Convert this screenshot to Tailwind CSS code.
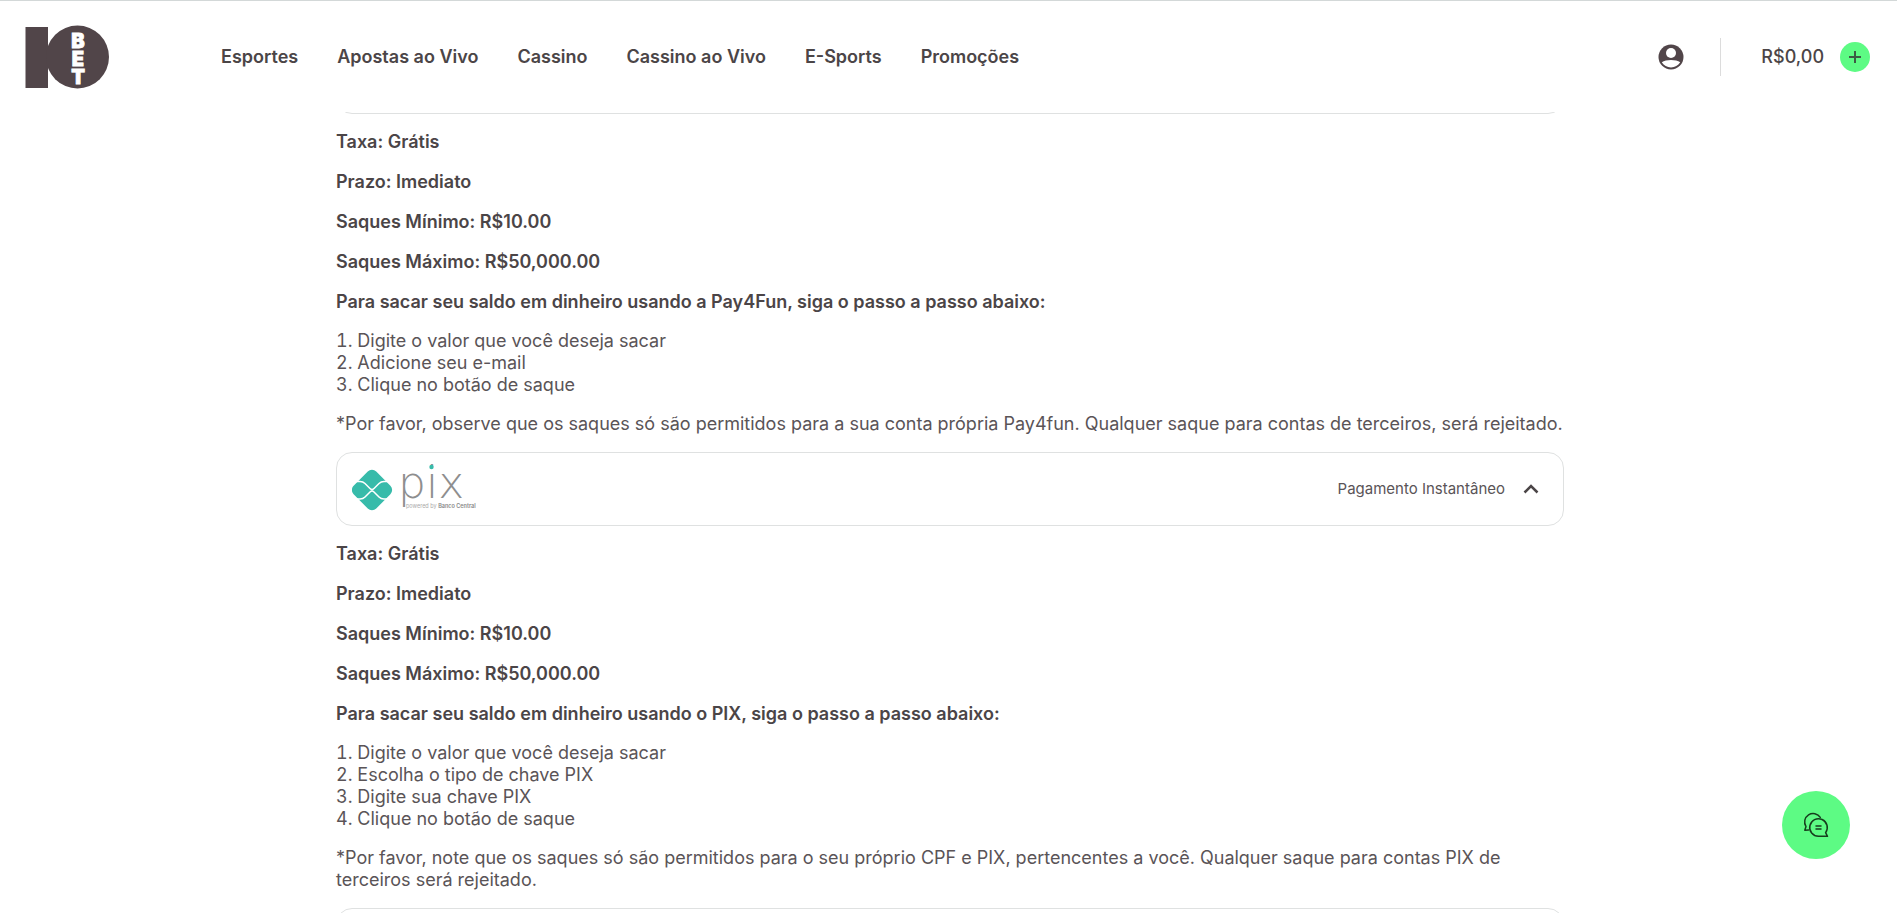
<!DOCTYPE html>
<html lang="pt-BR">
<head>
  <meta charset="UTF-8" />
  <meta name="viewport" content="width=device-width, initial-scale=1.0"/>
  <title>Saques | 10Bet</title>
  <script src="https://cdn.jsdelivr.net/npm/@tailwindcss/browser@4"></script>
</head>
<body class="h-screen overflow-hidden bg-white font-['Inter',sans-serif] text-lg text-[#4b4547]">

  <!-- Header -->
  <header class="relative z-10 flex h-28 items-center border-t border-[#d3d8d8] bg-white pt-px pr-[27px] pl-6">
    <a href="#" aria-label="10Bet" class="mr-28">
      <svg class="h-16 w-[85px]" viewBox="0 0 85 64">
        <rect x="1.500" y="2" width="22.500" height="61" fill="#514549"/>
        <circle cx="53.500" cy="32" r="31.500" fill="#514549"/>
        <g fill="#fff" stroke="#fff" stroke-width="0.8" font-family="Inter, sans-serif" font-size="20" font-weight="900" text-anchor="middle">
          <text x="54" y="23">B</text>
          <text x="54" y="41">E</text>
          <text x="54" y="59">T</text>
        </g>
      </svg>
    </a>

    <nav class="flex gap-[39px] font-semibold">
      <a href="#">Esportes</a>
      <a href="#">Apostas ao Vivo</a>
      <a href="#">Cassino</a>
      <a href="#">Cassino ao Vivo</a>
      <a href="#">E-Sports</a>
      <a href="#">Promoções</a>
    </nav>

    <div class="ml-auto flex items-center">
      <button type="button" aria-label="Minha conta">
        <svg class="size-[26px]" viewBox="0 0 26 26">
          <circle cx="13" cy="13" r="12.5" fill="#514549"/>
          <circle cx="13" cy="9" r="5" fill="#fff"/>
          <path d="M3.8 18.2C8 15.4 18 15.4 22.2 18.2C20 21.5 17 23.4 13 23.4S6 21.5 3.8 18.2Z" fill="#fff"/>
        </svg>
      </button>
      <span class="mx-9 h-[38px] w-px bg-[#dcdcdc]"></span>
      <span class="mr-4 ml-1 font-medium">R$0,00</span>
      <button type="button" aria-label="Depositar" class="flex size-[30px] items-center justify-center rounded-full bg-[#5dfb84]">
        <svg class="size-3" viewBox="0 0 12 12" fill="none" stroke="#3d5a45" stroke-width="2">
          <path d="M6 0V12M0 6H12"/>
        </svg>
      </button>
    </div>
  </header>

  <!-- Withdrawal methods -->
  <main class="pl-[3px]">
    <div class="mx-auto -mt-18 flex max-w-[1228px] flex-col gap-[17px] leading-[22px]">
      <div class="h-[74px] shrink-0 rounded-2xl border border-[#dfe1e1]"></div>

      <section class="flex flex-col gap-[17px]">
        <div class="flex flex-col gap-[18px] font-semibold">
          <p>Taxa: Grátis</p>
          <p>Prazo: Imediato</p>
          <p>Saques Mínimo: R$10.00</p>
          <p>Saques Máximo: R$50,000.00</p>
          <p>Para sacar seu saldo em dinheiro usando a Pay4Fun, siga o passo a passo abaixo:</p>
        </div>
        <ol class="list-inside list-decimal text-[#5a5457]">
          <li>Digite o valor que você deseja sacar</li>
          <li>Adicione seu e-mail</li>
          <li>Clique no botão de saque</li>
        </ol>
        <p class="text-[#5a5457]">*Por favor, observe que os saques só são permitidos para a sua conta própria Pay4fun. Qualquer saque para contas de terceiros, será rejeitado.</p>
      </section>

      <!-- PIX -->
      <button type="button" class="flex h-[74px] shrink-0 items-center justify-between rounded-2xl border border-[#dfe1e1] pr-6 pl-[15px]">
        <svg class="h-[60px] w-[124px]" viewBox="0 0 124 60">
          <rect x="4" y="15" width="32" height="32" rx="6" transform="rotate(45 20 31)" fill="#37bbaa"/>
          <path d="M3 22.500H8C10 22.500 11.500 23 13 24.500L18 29.500Q20 31.500 22 29.500L27 24.500C28.500 23 30 22.500 32 22.500H37M3 40H8C10 40 11.500 39.500 13 38L18 33Q20 31 22 33L27 38C28.500 39.500 30 40 32 40H37" fill="none" stroke="#fff" stroke-width="1.500"/>
          <text x="46" y="39" font-family="'DejaVu Sans Light', 'DejaVu Sans', sans-serif" font-size="44" font-weight="200" fill="#8e8e8e">pix</text>
          <circle cx="79.500" cy="8" r="2.200" fill="#37bbaa"/>
          <text x="54" y="49" font-family="Inter, sans-serif" font-size="5.500" fill="#aaa">powered by <tspan font-weight="600" fill="#888">Banco Central</tspan></text>
        </svg>
        <span class="flex items-center gap-[18px] text-[15px] text-[#5a5457]">
          Pagamento Instantâneo
          <svg class="h-2.5 w-4" viewBox="0 0 16 10" fill="none" stroke="#4b4547" stroke-width="2.500">
            <path d="M1.500 8.500L8 2L14.500 8.500"/>
          </svg>
        </span>
      </button>

      <section class="flex flex-col gap-[17px]">
        <div class="flex flex-col gap-[18px] font-semibold">
          <p>Taxa: Grátis</p>
          <p>Prazo: Imediato</p>
          <p>Saques Mínimo: R$10.00</p>
          <p>Saques Máximo: R$50,000.00</p>
          <p>Para sacar seu saldo em dinheiro usando o PIX, siga o passo a passo abaixo:</p>
        </div>
        <ol class="list-inside list-decimal text-[#5a5457]">
          <li>Digite o valor que você deseja sacar</li>
          <li>Escolha o tipo de chave PIX</li>
          <li>Digite sua chave PIX</li>
          <li>Clique no botão de saque</li>
        </ol>
        <p class="text-[#5a5457]">*Por favor, note que os saques só são permitidos para o seu próprio CPF e PIX, pertencentes a você. Qualquer saque para contas PIX de terceiros será rejeitado.</p>
      </section>

      <div class="h-[74px] shrink-0 rounded-2xl border border-[#dfe1e1]"></div>
    </div>
  </main>

  <!-- Chat -->
  <button type="button" aria-label="Chat" class="fixed right-[47px] bottom-[54px] flex size-17 items-center justify-center rounded-full bg-[#5dfb84]">
    <svg class="size-6 overflow-visible" viewBox="0 0 24 24" fill="none" stroke="#173d1d" stroke-width="1.500" stroke-linecap="round" stroke-linejoin="round">
      <path d="M16.300 4.400A8.500 8.500 0 1 0 2 13.600L0.800 17.300L4.500 17"/>
      <path d="M23.500 23.300H14.500A8.800 8.800 0 1 1 21.600 19.700Z"/>
      <path d="M12 13H17M12 16H17"/>
    </svg>
  </button>

</body>
</html>
